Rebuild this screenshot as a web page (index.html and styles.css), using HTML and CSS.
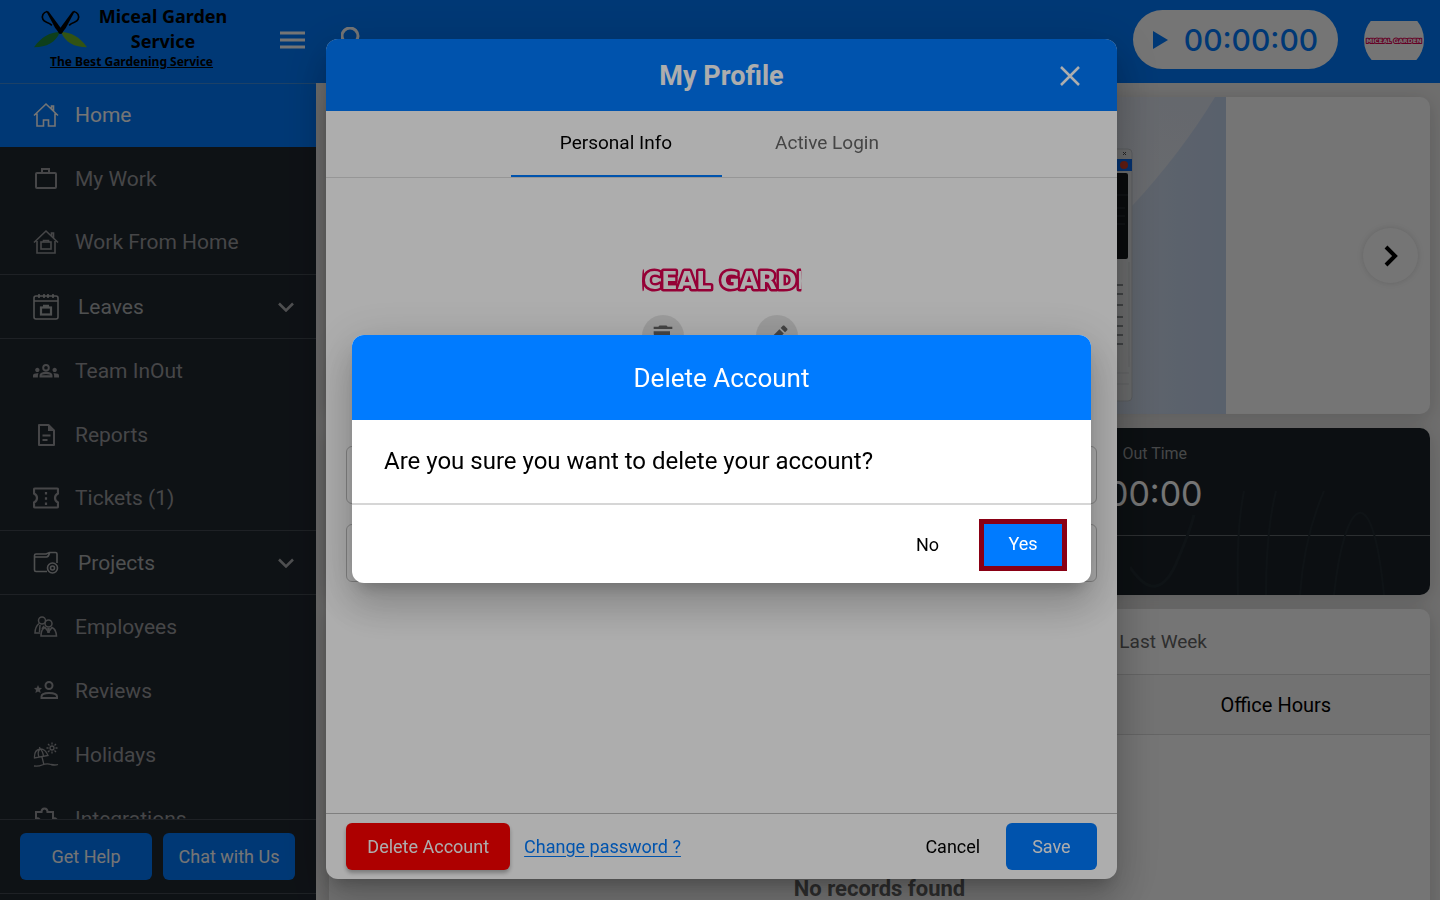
FILE: index.html
```html
<!DOCTYPE html>
<html lang="en">
<head>
<meta charset="UTF-8">
<meta name="viewport" content="width=device-width, initial-scale=1.0">
<title>Miceal Garden Service</title>
<link rel="stylesheet" href="styles.css">
</head>
<body>

<div class="page">
    <header class="topbar">
        <div class="brand">
            <div class="brand-row">
                <svg class="brand-logo" viewBox="0 0 160 114" width="53" height="38">
                    <path d="M78 66C50 66 22 80 0 112C38 112 66 98 78 66Z" fill="#1f8a3c"/>
                    <path d="M82 66C110 66 138 80 160 112C122 112 94 98 82 66Z" fill="#6fb52c"/>
                    <g fill="none" stroke="#000" stroke-width="5">
                        <path d="M40 4C28 6 22 18 27 28C31 38 42 34 54 46"/>
                        <path d="M120 4C132 6 138 18 133 28C129 38 118 34 106 46"/>
                    </g>
                    <path d="M36 2L44 4L88 64L78 72L64 54Z"/>
                    <path d="M124 2L116 4L72 64L82 72L96 54Z"/>
                    <circle cx="80" cy="64" r="7"/>
                </svg>
                <div class="brand-name">Miceal Garden Service</div>
            </div>
            <div class="brand-tagline">The Best Gardening Service</div>
        </div>
        <button class="icon-button menu-button" aria-label="Menu">
            <svg viewBox="0 0 25 20" width="25" height="20" stroke="currentColor" stroke-width="3"><path d="M0 3H25M0 10H25M0 17H25"/></svg>
        </button>
        <button class="icon-button search-button" aria-label="Search">
            <svg viewBox="0 0 26 26" width="26" height="26" fill="none" stroke="currentColor" stroke-width="3"><circle cx="9" cy="9" r="8"/><path d="M15 15L24 24"/></svg>
        </button>
        <button class="timer">
            <svg viewBox="0 0 15 18" width="15" height="18"><path d="M0 0L15 9L0 18Z" fill="currentColor"/></svg>
            <span>00:00:00</span>
        </button>
        <button class="avatar" aria-label="Profile">
            <svg viewBox="0 0 60 60" width="60" height="60">
                <clipPath id="avatar-clip"><rect y="11" width="60" height="39"/></clipPath>
                <circle cx="30" cy="30" r="30" fill="#fff" clip-path="url(#avatar-clip)"/>
                <text class="wordmark-small" x="30" y="33" text-anchor="middle">MICEAL GARDEN</text>
            </svg>
        </button>
    </header>

    <div class="layout">
        <aside class="sidebar">
            <nav class="menu">
                <a href="#" class="menu-item active">
                    <svg viewBox="0 0 26 26" fill="none" stroke="currentColor" stroke-width="1.6"><path d="M1 13.5L13 2L25 13.5M18.500 7V4H20.500V9M4 11.500V24H10.500V18H15.500V24H22V11.500"/></svg>
                    <span>Home</span>
                </a>
                <a href="#" class="menu-item">
                    <svg viewBox="0 0 26 26" fill="none" stroke="currentColor" stroke-width="2"><rect x="3" y="7" width="20" height="15" rx="1"/><path d="M9 7V3H16V7"/></svg>
                    <span>My Work</span>
                </a>
                <a href="#" class="menu-item divided">
                    <svg viewBox="0 0 26 26" fill="none" stroke="currentColor" stroke-width="1.6"><path d="M1 13.500L13 2L25 13.500M18.500 7V4H20.500V9M4 12V24H22V12"/><rect x="8" y="13" width="10" height="7"/><path d="M10.500 13V11.500H15.500V13"/></svg>
                    <span>Work From Home</span>
                </a>
                <a href="#" class="menu-item divided group">
                    <svg viewBox="0 0 26 26" fill="none" stroke="currentColor" stroke-width="1.6"><rect x="1" y="2" width="24" height="23" rx="2"/><path d="M1 7H25M6 0V4M11 0V4M15 0V4M20 0V4"/><rect x="8" y="13.500" width="10" height="7" stroke-width="2.200"/><path d="M10 12H16" stroke-width="2.500"/></svg>
                    <span>Leaves</span>
                    <svg class="chevron" viewBox="0 0 16 10" fill="none" stroke="currentColor" stroke-width="2.500"><path d="M1 1.500L8 8.500L15 1.500"/></svg>
                </a>
                <a href="#" class="menu-item">
                    <svg viewBox="0 0 24 24" fill="currentColor"><path d="M4 13c1.100 0 2-.9 2-2s-.9-2-2-2-2 .9-2 2 .9 2 2 2zm1.130 1.100c-.37-.06-.74-.1-1.130-.1-.99 0-1.930.21-2.780.58C.48 14.900 0 15.620 0 16.430V18h4.500v-1.610c0-.83.23-1.610.63-2.290zM20 13c1.100 0 2-.9 2-2s-.9-2-2-2-2 .9-2 2 .9 2 2 2zm4 3.430c0-.81-.48-1.530-1.220-1.850-.85-.37-1.790-.58-2.780-.58-.39 0-.76.04-1.130.1.4.68.63 1.460.63 2.290V18H24v-1.570zM16.240 13.650c-1.170-.52-2.610-.9-4.240-.9s-3.070.39-4.240.9C6.680 14.130 6 15.210 6 16.390V18h12v-1.610c0-1.180-.68-2.260-1.760-2.740zM8.070 16c.09-.23.13-.39.91-.69.97-.38 1.990-.56 3.020-.56s2.050.18 3.020.56c.77.3.81.46.91.69H8.070zM12 5.500a3.500 3.500 0 1 0 0 7a3.500 3.500 0 0 0 0-7zm0 5.200a1.700 1.700 0 1 1 0-3.400a1.700 1.700 0 0 1 0 3.400z" fill-rule="evenodd"/></svg>
                    <span>Team InOut</span>
                </a>
                <a href="#" class="menu-item">
                    <svg viewBox="0 0 26 26" fill="none" stroke="currentColor" stroke-width="2"><path d="M6 3H15.500L21 8.500V23H6Z" stroke-linejoin="round"/><path d="M15 3V9H21Z" fill="currentColor" stroke="none"/><path d="M9.500 13.500H17.500M9.500 18H14.500"/></svg>
                    <span>Reports</span>
                </a>
                <a href="#" class="menu-item divided">
                    <svg viewBox="0 0 26 26" fill="none" stroke="currentColor" stroke-width="2.200"><path d="M2 3.500H24Q25 3.500 25 4.500V8.500Q22 10 22 13Q22 16 25 17.500V21.500Q25 22.500 24 22.500H2Q1 22.500 1 21.500V17.500Q4 16 4 13Q4 10 1 8.500V4.500Q1 3.500 2 3.500Z"/><path d="M13 7V20" stroke-dasharray="2.500 2.700"/></svg>
                    <span>Tickets (1)</span>
                </a>
                <a href="#" class="menu-item divided group">
                    <svg viewBox="0 0 26 26" fill="none" stroke="currentColor" stroke-width="1.600"><path d="M14 21.500H3Q1.500 21.500 1.500 20V5.500Q1.500 4 3 4H13L16.500 2.500H22.500Q24 2.500 24 4V13M2 7H13.500Q15.500 7 16.500 3"/><circle cx="19.500" cy="18" r="5"/><circle cx="19.500" cy="18" r="2"/></svg>
                    <span>Projects</span>
                    <svg class="chevron" viewBox="0 0 16 10" fill="none" stroke="currentColor" stroke-width="2.500"><path d="M1 1.500L8 8.500L15 1.500"/></svg>
                </a>
                <a href="#" class="menu-item">
                    <svg viewBox="0 0 26 26" fill="none" stroke="currentColor" stroke-width="1.500"><circle cx="9" cy="6.500" r="3.500"/><circle cx="15.500" cy="9.500" r="3.500"/><path d="M6 9.500Q2 13 2 19H7M8 22Q8 15 12 13.500L15.500 18L19 13.500Q23 15 23.500 22ZM7 11L6.500 18M11 12L9 15"/><path d="M15.500 14V19" stroke-width="2.500"/></svg>
                    <span>Employees</span>
                </a>
                <a href="#" class="menu-item">
                    <svg viewBox="0 0 26 26" fill="none" stroke="currentColor" stroke-width="2"><path d="M5 7L6.200 9.800L9 10L7 12L7.600 15L5 13.500L2.400 15L3 12L1 10L3.800 9.800Z" fill="currentColor" stroke="none"/><circle cx="16" cy="7.500" r="3.500"/><path d="M8.500 20V18.500Q8.500 15 16 15Q24 15 24 18.500V20Z"/></svg>
                    <span>Reviews</span>
                </a>
                <a href="#" class="menu-item">
                    <svg viewBox="0 0 26 26" fill="none" stroke="currentColor" stroke-width="1.300"><path d="M1.500 16Q1 8 7 7Q12 6.500 15 13.500L1.500 16ZM6 15Q4 10 7 7Q10 9 10.500 14.500M7 7L6.500 5M9 15L11 23M1 24Q6 24.500 9 23Q14 21 18 22.500Q22 23.500 25 22.500"/><circle cx="19" cy="6" r="2"/><path d="M19 .5V2.500M19 9.500V11.500M13.500 6H15.500M22.500 6H24.500M15 2L16.500 3.500M21.500 8.500L23 10M23 2L21.500 3.500M15 10L16.500 8.500"/></svg>
                    <span>Holidays</span>
                </a>
                <a href="#" class="menu-item">
                    <svg viewBox="0 0 26 26" fill="none" stroke="currentColor" stroke-width="2"><path d="M3 6H8.500Q8.500 2.500 11.500 2.500Q14.500 2.500 14.500 6H20V12Q24 12 24 15Q24 18 20 18V24H3V18Q7 18 7 15Q7 12 3 12Z"/></svg>
                    <span>Integrations</span>
                </a>
            </nav>
            <div class="support">
                <button class="button primary">Get Help</button>
                <button class="button primary">Chat with Us</button>
            </div>
        </aside>

        <main class="content">
            <section class="card carousel">
                <svg class="slide" viewBox="0 0 693 317">
                    <defs>
                        <linearGradient id="slide-sky" x1="0" x2="1" y1="0" y2="0">
                            <stop offset=".8" stop-color="#d3dcea"/>
                            <stop offset="1" stop-color="#c2d3ec"/>
                        </linearGradient>
                        <linearGradient id="slide-light" x1="0" x2="1" y1="1" y2="0">
                            <stop offset="0" stop-color="#f1f1f1"/>
                            <stop offset="1" stop-color="#dde3ee"/>
                        </linearGradient>
                    </defs>
                    <rect width="693" height="317" fill="url(#slide-sky)"/>
                    <path d="M0 0H682Q648 56 600 108L500 200H0Z" fill="url(#slide-light)"/>
                    <rect x="400" y="52" width="199" height="252" rx="4" fill="#e6e8ea" stroke="#c3c8cd"/>
                    <path d="M590 55l3 3m0-3l-3 3" stroke="#555"/>
                    <rect x="400" y="62" width="199" height="12" fill="#0a6cf0"/>
                    <circle cx="591" cy="68" r="4" fill="#d8412a"/>
                    <rect x="400" y="76" width="195" height="86" rx="2" fill="#15191d"/>
                    <path d="M400 98H595M560 111H592M560 119H592M560 127H592" stroke="#30363c"/>
                    <path d="M560 188h30m-30 9h30m-30 11h30m-30 12h30m-30 9h30m-30 9h30m-30 9h30" stroke="#70757a" stroke-width="1.500"/>
                    <path d="M596 165V270M400 276H596M400 287H596" stroke="#cfd2d5" fill="none"/>
                </svg>
                <button class="carousel-next" aria-label="Next slide">
                    <svg viewBox="0 0 14 22" width="14" height="22" fill="none" stroke="#000" stroke-width="4"><path d="M2 2L11 11L2 20"/></svg>
                </button>
            </section>

            <section class="card attendance">
                <svg class="waves" viewBox="0 0 300 104" fill="none" stroke="#222b31">
                    <path d="M0 76Q28 118 48 68Q60 40 64 24" stroke-width="3"/>
                    <path d="M108 104Q106 40 114 0M136 104Q136 40 146 0M170 104Q174 46 194 0M204 104C214 10 242 -20 254 104" stroke-width="2"/>
                </svg>
                <div class="attendance-time">
                    <span class="attendance-label">Out Time</span>
                    <span class="attendance-value">00:00</span>
                </div>
            </section>

            <section class="card hours">
                <div class="hours-tabs">
                    <button class="hours-tab">Last Week</button>
                </div>
                <table class="hours-table">
                    <thead>
                        <tr><td></td><th>Office Hours</th></tr>
                    </thead>
                    <tbody>
                        <tr><td colspan="2">No records found</td></tr>
                    </tbody>
                </table>
            </section>
        </main>
    </div>
</div>

<div class="overlay">
    <div class="dialog profile" role="dialog" aria-labelledby="profile-title">
        <div class="profile-header">
            <h2 id="profile-title">My Profile</h2>
            <button class="icon-button close-button" aria-label="Close">
                <svg viewBox="0 0 20 20" width="20" height="20" stroke="currentColor" stroke-width="2.500"><path d="M1 1L19 19M19 1L1 19"/></svg>
            </button>
        </div>
        <div class="tabs">
            <button class="tab active">Personal Info</button>
            <button class="tab">Active Login</button>
        </div>
        <div class="profile-body">
            <div class="photo">
                <svg viewBox="0 0 160 160" width="160" height="160">
                    <clipPath id="photo-clip"><circle cx="80" cy="80" r="80"/></clipPath>
                    <g clip-path="url(#photo-clip)">
                        <text class="wordmark" x="80" y="88" text-anchor="middle">MICEAL GARDEN</text>
                    </g>
                </svg>
                <button class="photo-button photo-delete" aria-label="Remove photo">
                    <svg viewBox="0 0 24 24" width="28" height="28" fill="currentColor"><path d="M6 19c0 1.100.9 2 2 2h8c1.100 0 2-.9 2-2V8H4v2l2 9zM20 4h-4l-1-1H9L8 4H4v2h16V4z"/></svg>
                </button>
                <button class="photo-button photo-edit" aria-label="Change photo">
                    <svg viewBox="0 0 24 24" width="28" height="28" fill="currentColor"><path d="M3 17.250V21h3.750L17.810 9.940l-3.750-3.750L3 17.250zM20.710 7.040c.39-.39.39-1.020 0-1.410l-2.340-2.340c-.39-.39-1.020-.39-1.410 0l-1.830 1.830 3.750 3.750 1.830-1.830z"/></svg>
                </button>
            </div>
            <form class="profile-form">
                <input type="text" aria-label="First name">
                <input type="text" aria-label="Last name">
                <input type="email" aria-label="Email">
                <input type="tel" aria-label="Phone">
            </form>
        </div>
        <div class="profile-footer">
            <button class="button danger">Delete Account</button>
            <a href="#" class="password-link">Change password ?</a>
            <button class="button plain">Cancel</button>
            <button class="button primary">Save</button>
        </div>
    </div>
</div>

<div class="overlay">
    <div class="dialog confirm" role="alertdialog" aria-labelledby="confirm-title">
        <h2 id="confirm-title" class="confirm-header">Delete Account</h2>
        <p class="confirm-text">Are you sure you want to delete your account?</p>
        <div class="confirm-footer">
            <button class="button plain">No</button>
            <button class="button yes">Yes</button>
        </div>
    </div>
</div>

</body>
</html>
```
FILE: styles.css
```css
*, *:before, *:after {
    box-sizing: border-box;
}

body {
    margin: 0;
    font: 400 20px/24px Roboto, sans-serif;
    color: #000;
}

button, input {
    font: inherit;
    color: inherit;
}

button {
    border: none;
    padding: 0;
    background: none;
    cursor: pointer;
}

a {
    color: inherit;
    text-decoration: none;
}

h2, p {
    margin: 0;
}

svg {
    display: block;
    flex: none;
}

.page {
    height: 100vh;
    display: flex;
    flex-direction: column;
    overflow: hidden;
}

/* top bar */

.topbar {
    height: 83px;
    flex: none;
    display: flex;
    align-items: center;
    padding: 0 16px 4px 0;
    background: #007bff;
    color: #fff;
}

.brand {
    width: 280px;
    align-self: flex-start;
    padding: 4px 0 0 34px;
    color: #000;
    font-family: "Noto Sans", sans-serif;
    font-weight: 700;
}

.brand-row {
    display: flex;
    align-items: center;
    gap: 8px;
}

.brand-name {
    width: 136px;
    font-size: 18px;
    line-height: 25px;
    text-align: center;
}

.brand-tagline {
    width: 195px;
    font-size: 12px;
    line-height: 16px;
    text-align: center;
    text-decoration: underline;
}

.search-button {
    margin-left: 36px;
    margin-right: auto;
}

.timer {
    width: 205px;
    height: 59px;
    display: flex;
    align-items: center;
    justify-content: center;
    gap: 16px;
    border-radius: 30px;
    background: #fff;
    color: #007bff;
    font: 500 30px/36px Inter, sans-serif;
}

.avatar {
    margin-left: 26px;
}

.wordmark,
.wordmark-small {
    font-family: "DejaVu Sans", sans-serif;
    font-weight: 700;
    fill: #fff;
    stroke: #dc0050;
    paint-order: stroke;
    stroke-linejoin: round;
}

.wordmark {
    font-size: 24px;
    stroke-width: 5px;
}

.wordmark-small {
    font-size: 6px;
    stroke-width: 2px;
}

/* sidebar */

.layout {
    flex: 1;
    min-height: 0;
    display: flex;
}

.sidebar {
    width: 316px;
    flex: none;
    display: flex;
    flex-direction: column;
    padding-bottom: 6px;
    background: #212830;
    color: #989a9c;
}

.menu {
    flex: 1;
    min-height: 0;
    overflow: hidden;
}

.menu-item {
    height: 64px;
    display: flex;
    align-items: center;
    gap: 16px;
    padding: 0 22px 1px 33px;
    font-size: 21px;
}

.menu-item svg {
    width: 26px;
    height: 26px;
}

.menu-item.active {
    background: #007bff;
    border-top: 1px solid #3f8fe0;
    color: #fff;
}

.menu-item.divided {
    border-bottom: 1px solid #434a51;
}

.menu-item.group {
    gap: 19px;
    padding-bottom: 0;
    color: #acaeb0;
}

.menu-item .chevron {
    width: 16px;
    height: 10px;
    margin-left: auto;
}

.support {
    display: flex;
    gap: 11px;
    padding: 13px 21px 13px 20px;
    border: solid #434a51;
    border-width: 1px 0;
    color: #fff;
}

.button {
    height: 47px;
    padding: 0 26px;
    border-radius: 6px;
    font-size: 18px;
    white-space: nowrap;
}

.button.primary {
    background: #007bff;
    color: #fff;
}

.support .button {
    flex: 1;
    padding: 0;
}

/* main content */

.content {
    flex: 1;
    min-width: 0;
    display: flex;
    flex-direction: column;
    gap: 14px;
    padding: 14px 10px 0 13px;
    background: #f1f0ef;
}

.card {
    position: relative;
    flex: none;
    border-radius: 10px;
    background: #fff;
    box-shadow: 0 4px 20px rgba(0,0,0,.16);
}

.carousel {
    height: 317px;
    display: flex;
    justify-content: center;
}

.slide {
    height: 100%;
}

.carousel-next {
    position: absolute;
    right: 12px;
    top: 131px;
    width: 55px;
    height: 55px;
    display: flex;
    align-items: center;
    justify-content: center;
    border-radius: 50%;
    background: #fff;
    box-shadow: 0 0 6px rgba(0,0,0,.14);
}

.attendance {
    height: 167px;
    display: grid;
    grid-template-columns: 1fr 1fr;
    grid-template-rows: 107px 1fr;
    overflow: hidden;
    background: #1b2329;
}

.waves {
    position: absolute;
    right: 0;
    bottom: 0;
    width: 300px;
    height: 104px;
}

.attendance-time {
    position: relative;
    grid-column: 2;
    display: flex;
    flex-direction: column;
    align-items: center;
    gap: 8px;
    padding-top: 14px;
}

.attendance:after {
    content: "";
    grid-column: 1 / 3;
    border-top: 1px solid #62686c;
}

.attendance-label {
    color: #9a9c9e;
    font-size: 16px;
}

.attendance-value {
    color: #fff;
    font: 400 34px/40px Inter, sans-serif;
}

.hours {
    height: 320px;
}

.hours-tabs {
    height: 65px;
    display: flex;
    justify-content: flex-end;
    padding-right: 223px;
}

.hours-tab {
    color: #666;
    font-size: 19px;
}

.hours-table {
    width: 100%;
    border-collapse: collapse;
    text-align: center;
}

.hours-table thead {
    height: 60px;
    background: #f9f9f9;
    border: solid #dcdcdc;
    border-width: 1px 0;
}

.hours-table th {
    width: 28%;
    font-weight: 400;
}

.hours-table tbody td {
    padding-top: 142px;
    color: #666;
    font-size: 22px;
    font-weight: 700;
}

/* dialogs */

.overlay {
    position: fixed;
    inset: 0;
    display: flex;
    align-items: center;
    justify-content: center;
    padding: 18px 0 0 3px;
    background: rgba(0,0,0,.32);
}

.dialog {
    overflow: hidden;
    border-radius: 12px;
    background: #fff;
    box-shadow: 0 11px 15px -7px rgba(0,0,0,.2), 0 24px 38px 3px rgba(0,0,0,.14), 0 9px 46px 8px rgba(0,0,0,.12);
}

.profile {
    width: 55%;
    height: calc(100vh - 60px);
    display: flex;
    flex-direction: column;
}

.profile-header {
    height: 72px;
    flex: none;
    display: grid;
    grid-template-columns: 1fr auto 1fr;
    align-items: center;
    padding: 2px 37px 0;
    background: #007bff;
    color: #fff;
}

.profile-header h2 {
    grid-column: 2;
    font-size: 27px;
    line-height: 32px;
    font-weight: 700;
}

.close-button {
    justify-self: end;
}

.tabs {
    height: 67px;
    flex: none;
    display: flex;
    justify-content: center;
    border-bottom: 1px solid #ddd;
}

.tab {
    width: 211px;
    border-bottom: 2px solid transparent;
    color: #666;
    font-size: 19px;
}

.tab.active {
    border-bottom-color: #007bff;
    color: #000;
}

.profile-body {
    flex: 1;
    min-height: 0;
    padding: 23px 20px 0;
}

.photo {
    position: relative;
    width: 160px;
    margin: 0 auto 85px;
}

.photo-button {
    position: absolute;
    top: 114px;
    width: 42px;
    height: 42px;
    display: flex;
    align-items: center;
    justify-content: center;
    border-radius: 50%;
    background: #e6e6e6;
    color: #666;
}

.photo-delete {
    left: 0;
}

.photo-edit {
    right: 4px;
}

.profile-form {
    display: grid;
    grid-template-columns: 1fr 1fr;
    gap: 20px;
}

.profile-form input {
    height: 58px;
    padding: 0 16px;
    border: 1px solid #c4c4c4;
    border-radius: 6px;
    background: none;
}

.profile-footer {
    display: flex;
    align-items: center;
    padding: 9px 20px;
    border-top: 1px solid #bbb;
}

.button.danger {
    padding: 0 21px;
    background: #f00;
    color: #fff;
    box-shadow: 0 3px 4px rgba(0,0,0,.3);
}

.password-link {
    margin: 0 auto 0 14px;
    color: #007bff;
    font-size: 18px;
    text-decoration: underline;
    text-underline-offset: 3px;
}

.confirm {
    width: 739px;
    max-width: 90%;
}

.confirm-header {
    height: 85px;
    background: #007bff;
    color: #fff;
    font-size: 26px;
    line-height: 86px;
    font-weight: 400;
    text-align: center;
}

.confirm-text {
    padding: 26px 32px 27px;
    border-bottom: 2px solid #d6d6d6;
    font-size: 24px;
    line-height: 30px;
}

.confirm-footer {
    display: flex;
    align-items: center;
    justify-content: flex-end;
    gap: 14px;
    padding: 14px 24px 12px;
}

.button.yes {
    width: 88px;
    height: 52px;
    padding: 0 0 2px;
    border: 5px solid #8a0014;
    border-radius: 0;
    background: #007bff;
    color: #fff;
}
```
